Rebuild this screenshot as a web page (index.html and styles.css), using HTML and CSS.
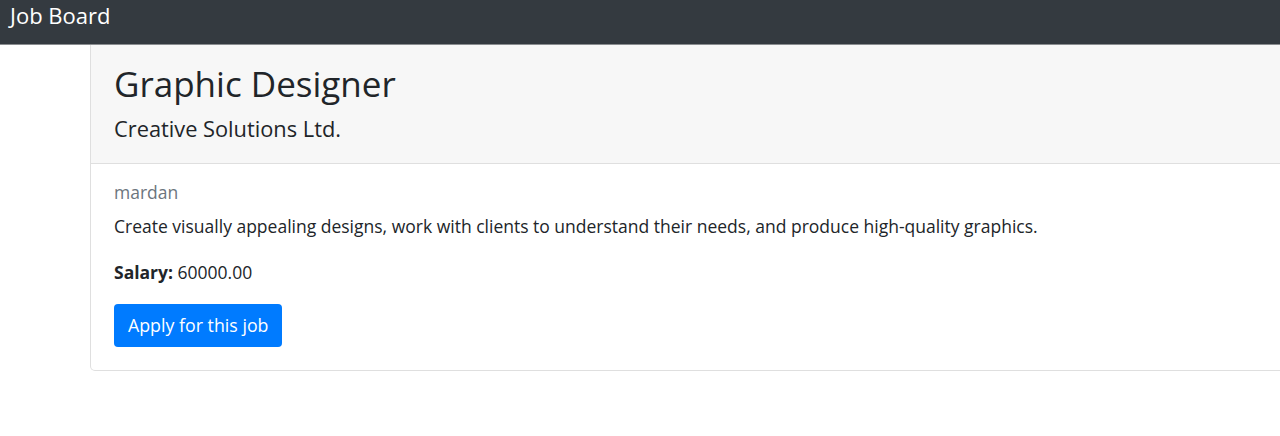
FILE: index.html
```html
<!DOCTYPE html>
<html lang="en">
<head>
<meta charset="utf-8">
<title>Job Board</title>
<link rel="stylesheet" href="styles.css">
</head>
<body>
<nav class="navbar">
  <span class="brand">Job Board</span>
</nav>
<main class="container">
  <section class="card">
    <header class="card-header">
      <h1 class="title">Graphic Designer</h1>
      <h2 class="company">Creative Solutions Ltd.</h2>
    </header>
    <div class="card-body">
      <p class="location">mardan</p>
      <p class="desc">Create visually appealing designs, work with clients to understand their needs, and produce high-quality graphics.</p>
      <p class="salary"><strong>Salary:</strong> 60000.00</p>
      <a class="btn" href="#">Apply for this job</a>
    </div>
  </section>
</main>
</body>
</html>
```
FILE: styles.css
```css
html, body {
  margin: 0;
  overflow-x: hidden;
}
body {
  font-family: "Open Sans", "Noto Sans", sans-serif;
  color: #212529;
  background: #fff;
  font-size: 17.5px;
}
.navbar {
  height: 44px;
  background: #343a40;
  border-bottom: 1px solid #8a8d90;
  display: flex;
  align-items: flex-start;
  padding-left: 10px;
}
.brand {
  color: #fff;
  font-size: 22px;
  line-height: 30px;
}
.container {
  padding-left: 90px;
}
.card {
  width: 1220px;
  border: 1px solid #dfdfdf;
  border-top: none;
  border-radius: 0 0 5px 5px;
}
.card-header {
  background: #f7f7f7;
  border-bottom: 1px solid #dfdfdf;
  padding: 14px 23px 0;
  height: 119px;
  box-sizing: border-box;
}
.title {
  margin: 0;
  font-weight: 400;
  font-size: 35px;
  line-height: 50px;
}
.company {
  margin: 4px 0 0;
  font-weight: 400;
  font-size: 21.8px;
  line-height: 32px;
}
.card-body {
  padding: 13px 23px 23px;
}
.card-body p {
  margin: 0;
  line-height: 30px;
}
.location {
  color: #6c757d;
}
.card-body .desc {
  margin-top: 4px;
}
.card-body .salary {
  margin-top: 16px;
}
.btn {
  display: inline-block;
  margin-top: 17px;
  background: #007bff;
  color: #fff;
  text-decoration: none;
  font-size: 17.8px;
  padding: 6px 14px;
  border-radius: 4px;
  line-height: 31px;
}
```
